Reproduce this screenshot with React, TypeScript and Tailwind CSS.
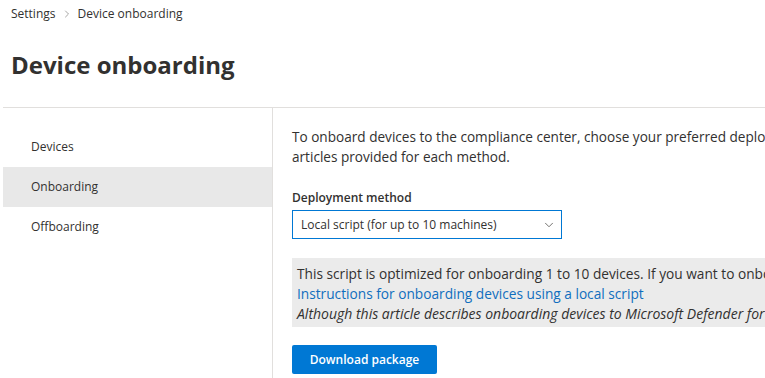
import { ChevronDown, ChevronRight } from "lucide-react";

const NAV_ITEMS = [
  { label: "Devices", active: false },
  { label: "Onboarding", active: true },
  { label: "Offboarding", active: false },
];

export default function App() {
  return (
    <div
      className="h-[378px] w-[765px] overflow-hidden bg-white text-[#323130]"
      style={{ fontFamily: '"Segoe UI", "Open Sans", sans-serif' }}
    >
      <div className="flex items-center gap-[5px] pl-[11px] pt-[5px] text-[12px] leading-[18px]">
        <span>Settings</span>
        <ChevronRight className="h-[12px] w-[12px] text-[#8a8886]" strokeWidth={1.5} />
        <span>Device onboarding</span>
      </div>

      <h1 className="pl-[11px] pt-[26px] text-[24px] font-bold leading-[32px]">Device onboarding</h1>

      <div className="ml-[3px] mt-[26px] flex h-[300px] border-t border-[#e1dfdd]">
        <nav className="w-[270px] shrink-0 border-r border-[#e1dfdd] pt-[19px]">
          {NAV_ITEMS.map((item) => (
            <div
              key={item.label}
              className={`flex h-[40px] items-center pl-[28px] text-[12px] ${item.active ? "bg-[#e8e8e8]" : ""}`}
            >
              {item.label}
            </div>
          ))}
        </nav>

        <main className="min-w-0 flex-1 pl-[19px] pt-[19px]">
          <p className="whitespace-nowrap text-[13.6px] leading-[20px]">
            To onboard devices to the compliance center, choose your preferred deployment method and follow the
            <br />
            articles provided for each method.
          </p>

          <div className="mt-[22px] text-[12px] font-semibold leading-[18px]">Deployment method</div>
          <div className="mt-[3px] flex h-[29px] w-[270px] items-center justify-between border border-[#0078d4] pl-[8px] pr-[5px] text-[12px]">
            <span>Local script (for up to 10 machines)</span>
            <ChevronDown className="h-[14px] w-[14px] text-[#605e5c]" strokeWidth={1.5} />
          </div>

          <div className="mt-[19px] whitespace-nowrap bg-[#ebebeb] pb-[3px] pl-[5px] pt-[6px] text-[13.7px] leading-[20px]">
            <div>This script is optimized for onboarding 1 to 10 devices. If you want to onboard more devices, use another method.</div>
            <div className="text-[#106ebe]">Instructions for onboarding devices using a local script</div>
            <div className="text-[14px] italic">
              Although this article describes onboarding devices to Microsoft Defender for Endpoint, the steps are the same.
            </div>
          </div>

          <button className="mt-[18px] h-[29px] w-[145px] rounded-[2px] bg-[#0078d4] text-[12px] font-semibold text-white">
            Download package
          </button>
        </main>
      </div>
    </div>
  );
}
